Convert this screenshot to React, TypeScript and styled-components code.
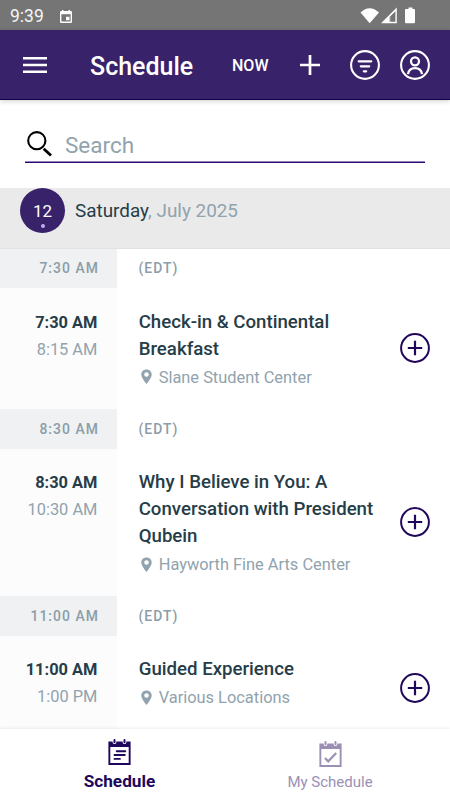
import React from "react";
import styled, { createGlobalStyle } from "styled-components";

const GlobalStyle = createGlobalStyle`
  *, *::before, *::after { box-sizing: border-box; }
  body { margin: 0; background: #fff; }
  button { border: 0; padding: 0; background: none; color: inherit; font: inherit; letter-spacing: inherit; }
  svg { display: block; flex: none; }
`;

const Screen = styled.div`
  width: 450px;
  height: 800px;
  overflow: hidden;
  display: flex;
  flex-direction: column;
  background: #fff;
  color: #263d48;
  font-family: Roboto, "Liberation Sans", sans-serif;
`;

const StatusBar = styled.div`
  flex: none;
  height: 30px;
  display: flex;
  align-items: center;
  padding: 2px 34px 0 10px;
  background: #757575;
  color: #fff;
  font-size: 17.5px;
`;

const Clock = styled.span`
  width: 50px;
  color: #f4f4f4;
`;

const StatusIcons = styled.div`
  display: flex;
  align-items: center;
  margin-left: auto;
`;

const Header = styled.header`
  flex: none;
  position: relative;
  height: 70px;
  display: flex;
  align-items: center;
  padding: 0 20px 0 23px;
  background: #38226a;
  border-bottom: 1px solid #10004c;
  box-shadow: 0 1px 5px rgba(0, 0, 0, 0.2);
  color: #fff;
`;

const Title = styled.h1`
  width: 142px;
  margin: 0 0 0 43px;
  padding-top: 4px;
  font-size: 25px;
  font-weight: 500;
  line-height: 30px;
`;

const NowButton = styled.button`
  width: 68px;
  padding-top: 2px;
  text-align: left;
  font-size: 16px;
  font-weight: 500;
`;

const HeaderButton = styled.button<{ $gap?: number }>`
  margin-left: ${(p) => p.$gap ?? 0}px;
`;

const SearchArea = styled.div`
  flex: none;
  height: 88px;
  padding: 25px 25px 0;
`;

const SearchField = styled.label`
  height: 38px;
  display: flex;
  align-items: center;
  gap: 12px;
  padding: 0 0 1px 1px;
  border-bottom: 1px solid #2b0a72;
  box-shadow: inset 0 -0.5px #2b0a72;
  color: #90a3ae;
  font-size: 22.5px;
`;

const SearchText = styled.span`
  padding-top: 4px;
`;

const DayBar = styled.div`
  flex: none;
  height: 61px;
  display: flex;
  align-items: flex-start;
  padding-left: 20px;
  background: #eaeaea;
  border-bottom: 1px solid #e2e2e2;
`;

const DayBadge = styled.div`
  width: 45px;
  height: 45px;
  display: flex;
  flex-direction: column;
  align-items: center;
  border-radius: 50%;
  padding-top: 12px;
  background: #38226a;
  color: #fff;
  font-size: 17px;
  line-height: 22px;
  &::after {
    content: "";
    width: 4px;
    height: 4px;
    margin-top: 2px;
    border-radius: 50%;
    background: #c3abf4;
  }
`;

const DayLabel = styled.div`
  margin-left: 10px;
  color: #90a3ae;
  font-size: 18.9px;
  line-height: 46px;
`;

const DayName = styled.span`
  color: #263d48;
`;

const Agenda = styled.main`
  flex: 1;
  min-height: 0;
  overflow: hidden;
`;

const SlotHeader = styled.div<{ $height: number }>`
  height: ${(p) => p.$height}px;
  display: grid;
  grid-template-columns: 117.4px 1fr;
  align-items: stretch;
  color: #8b9da8;
  font-size: 13.9px;
  font-weight: 500;
  letter-spacing: 1.05px;
  line-height: ${(p) => p.$height}px;
`;

const SlotTime = styled.div`
  padding-right: 18.5px;
  background: #eff1f3;
  text-align: right;
`;

const SlotZone = styled.div`
  padding-left: 21px;
`;

const SessionRow = styled.article<{ $height: number }>`
  height: ${(p) => p.$height}px;
  display: grid;
  grid-template-columns: 117.4px 247.6px 1fr;
`;

const Times = styled.div`
  padding: 20.7px 20px 0 0;
  background: #fcfcfc;
  text-align: right;
  font-size: 16.4px;
  line-height: 27px;
`;

const StartTime = styled.div`
  font-weight: 700;
`;

const EndTime = styled.div`
  color: #90a3ae;
`;

const Details = styled.div`
  padding: 20.7px 0 0 21.3px;
`;

const SessionTitle = styled.h2`
  margin: 0;
  font-size: 18.65px;
  font-weight: 500;
  line-height: 27px;
  white-space: pre;
`;

const Place = styled.div`
  height: 29px;
  display: flex;
  align-items: center;
  gap: 7px;
  padding-left: 2px;
  color: #90a3ae;
  font-size: 16.4px;
  white-space: nowrap;
`;

const AddButton = styled.button`
  place-self: center start;
  margin-left: 35px;
  color: #21075c;
`;

const TabBar = styled.nav`
  flex: none;
  position: relative;
  height: 71px;
  display: grid;
  grid-template-columns: 239px 182px;
  background: #fff;
  box-shadow: 0 -1px 3px rgba(0, 0, 0, 0.07);
`;

const Tab = styled.button<{ $active?: boolean }>`
  display: flex;
  flex-direction: column;
  align-items: center;
  padding-top: ${(p) => (p.$active ? 10 : 12)}px;
  color: ${(p) => (p.$active ? "#21075c" : "#9b90b4")};
  font-size: ${(p) => (p.$active ? 17.2 : 15)}px;
  font-weight: ${(p) => (p.$active ? 700 : 400)};
  line-height: 20px;
  gap: ${(p) => (p.$active ? 5 : 4)}px;
`;

const EventIcon = () => (
  <svg width="12" height="13" viewBox="0 0 12 13">
    <path fill="#fff" fillRule="evenodd" d="M2 0h1.5v1h5V0H10v1h.7q1.3 0 1.3 1.3v9.4q0 1.3-1.3 1.3H1.3Q0 13 0 11.7V2.3Q0 1 1.3 1H2zM1.4 4.3v7.3h9.2V4.3zM6 6.8h3.5v3.4H6z" />
  </svg>
);

const StatusGlyphs = () => (
  <svg width="56" height="18" viewBox="0 0 56 18" fill="#fff">
    <path d="M.5 5.5Q9.5-3 19 5.5L9.7 16.3z" />
    <path fillRule="evenodd" d="M36.8.5V16.2H21zM35.4 4.2 29.6 10v4.8h5.8z" />
    <path d="M29.6 10h1.2v4.8h-1.2z" opacity=".3" />
    <path d="M48.5.5h4V2H54q1 0 1 1V15.2q0 1-1 1h-8q-1 0-1-1V3q0-1 1-1h2.5z" />
  </svg>
);

const MenuIcon = () => (
  <svg width="24" height="18" viewBox="0 0 24 18" fill="#fff">
    <path d="M0 1h24v2.6H0zM0 7.7h24v2.6H0zM0 14.4h24V17H0z" />
  </svg>
);

const PlusIcon = () => (
  <svg width="20" height="20" viewBox="0 0 20 20" stroke="#fff" strokeWidth="2.7">
    <path d="M10 0v20M0 10h20" />
  </svg>
);

const FilterIcon = () => (
  <svg width="30" height="30" viewBox="0 0 30 30" fill="none" stroke="#fff" strokeWidth="2.1">
    <circle cx="15" cy="15" r="13.9" />
    <path d="M8.7 11.3h12.6M10.8 16.3h8.4M13.8 21.3h2.4" strokeLinecap="round" strokeWidth="2.2" />
  </svg>
);

const ProfileIcon = () => (
  <svg width="30" height="30" viewBox="0 0 30 30" fill="none" stroke="#fff" strokeWidth="2.1">
    <circle cx="15" cy="15" r="13.9" />
    <circle cx="15" cy="11.3" r="4" strokeWidth="2.3" />
    <path d="M8 24.2C8.6 20.3 11.4 18.2 15 18.2s6.4 2.1 7 6" strokeWidth="2.3" />
  </svg>
);

const SearchIcon = () => (
  <svg width="27" height="27" viewBox="0 0 27 27" fill="none" stroke="#000">
    <circle cx="10.8" cy="10.7" r="8.6" strokeWidth="2.1" />
    <path d="m17.7 18.7 7.3 6.9" strokeWidth="2.8" />
  </svg>
);

const PinIcon = () => (
  <svg width="11" height="16" viewBox="0 0 11 16" fill="currentColor">
    <path fillRule="evenodd" d="M5.5.5C2.3.5.3 2.7.3 5.5c0 3.5 5.2 9.5 5.2 9.5s5.2-6 5.2-9.5c0-2.8-2-5-5.2-5zm0 2.7a2.3 2.3 0 1 1 0 4.6 2.3 2.3 0 0 1 0-4.6z" />
  </svg>
);

const AddIcon = () => (
  <svg width="30" height="30" viewBox="0 0 30 30" fill="none" stroke="currentColor" strokeWidth="2">
    <circle cx="15" cy="15" r="13.9" />
    <path d="M15 7.8v14.4M7.8 15h14.4" strokeWidth="2.2" />
  </svg>
);

const CalendarIcon = ({ checked }: { checked?: boolean }) => (
  <svg width="23" height="27" viewBox="0 0 23 27" fill="currentColor">
    <path fillRule="evenodd" d="M.4 2.5h4.1c.1 3.4 3.9 3.4 4 0h6c.1 3.4 3.9 3.4 4 0h4.1V26H.4zM2.3 8v16.1h18.4V8z" />
    <rect x="5.5" y="0" width="2" height="4.3" rx="1" />
    <rect x="15.5" y="0" width="2" height="4.3" rx="1" />
    {checked ? (
      <path d="m6 17 3.2 3.3 8-8.3" fill="none" stroke="currentColor" strokeWidth="2.2" />
    ) : (
      <path d="M8.7 12.2h8.6M6.5 16h10.3M6.5 19.9h5.4" fill="none" stroke="currentColor" strokeWidth="1.9" strokeLinecap="round" />
    )}
  </svg>
);

interface Slot {
  start: string;
  end: string;
  title: string;
  place: string;
  headerHeight: number;
  height: number;
}

const slots: Slot[] = [
  { start: "7:30 AM", end: "8:15 AM", title: "Check-in & Continental\nBreakfast", place: "Slane Student Center", headerHeight: 39, height: 120.6 },
  { start: "8:30 AM", end: "10:30 AM", title: "Why I Believe in You: A\nConversation with President\nQubein", place: "Hayworth Fine Arts Center", headerHeight: 40, height: 147 },
  { start: "11:00 AM", end: "1:00 PM", title: "Guided Experience", place: "Various Locations", headerHeight: 40, height: 105 },
];

export default function App() {
  return (
    <>
      <GlobalStyle />
      <Screen>
        <StatusBar>
          <Clock>9:39</Clock>
          <EventIcon />
          <StatusIcons><StatusGlyphs /></StatusIcons>
        </StatusBar>
        <Header>
          <HeaderButton aria-label="Menu"><MenuIcon /></HeaderButton>
          <Title>Schedule</Title>
          <NowButton>NOW</NowButton>
          <HeaderButton aria-label="Add"><PlusIcon /></HeaderButton>
          <HeaderButton $gap={30} aria-label="Filter"><FilterIcon /></HeaderButton>
          <HeaderButton $gap={20} aria-label="Profile"><ProfileIcon /></HeaderButton>
        </Header>
        <SearchArea>
          <SearchField><SearchIcon /><SearchText>Search</SearchText></SearchField>
        </SearchArea>
        <DayBar>
          <DayBadge>12</DayBadge>
          <DayLabel><DayName>Saturday</DayName>, July 2025</DayLabel>
        </DayBar>
        <Agenda>
          {slots.map((s) => (
            <section key={s.start}>
              <SlotHeader $height={s.headerHeight}>
                <SlotTime>{s.start}</SlotTime>
                <SlotZone>(EDT)</SlotZone>
              </SlotHeader>
              <SessionRow $height={s.height}>
                <Times>
                  <StartTime>{s.start}</StartTime>
                  <EndTime>{s.end}</EndTime>
                </Times>
                <Details>
                  <SessionTitle>{s.title}</SessionTitle>
                  <Place><PinIcon />{s.place}</Place>
                </Details>
                <AddButton aria-label="Add to my schedule"><AddIcon /></AddButton>
              </SessionRow>
            </section>
          ))}
        </Agenda>
        <TabBar>
          <Tab $active><CalendarIcon />Schedule</Tab>
          <Tab><CalendarIcon checked />My Schedule</Tab>
        </TabBar>
      </Screen>
    </>
  );
}
